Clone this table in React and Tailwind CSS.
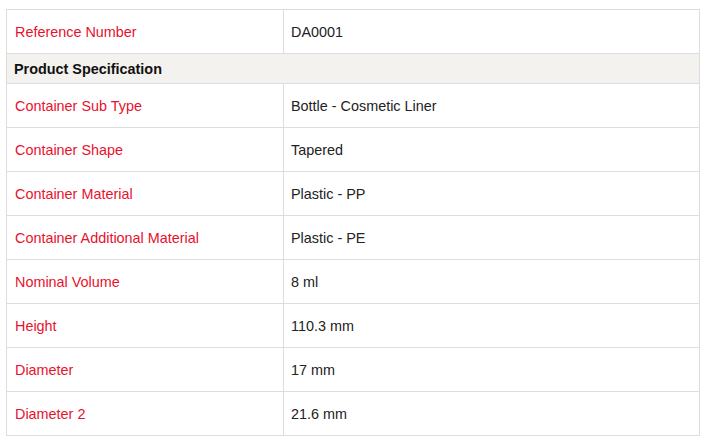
export default function App() {
  const rows = [
    ["Container Sub Type", "Bottle - Cosmetic Liner"],
    ["Container Shape", "Tapered"],
    ["Container Material", "Plastic - PP"],
    ["Container Additional Material", "Plastic - PE"],
    ["Nominal Volume", "8 ml"],
    ["Height", "110.3 mm"],
    ["Diameter", "17 mm"],
    ["Diameter 2", "21.6 mm"],
  ];
  return (
    <div className="w-[711px] h-[445px] bg-white pt-[9px] pl-[6px]" style={{ fontFamily: '"Liberation Sans", Arial, sans-serif' }}>
      <div className="w-[694px] border border-[#dddddd] text-[14.4px]">
        <div className="flex h-[43px]">
          <div className="w-[276px] flex items-center pl-[8px] pt-[2px] text-[#e8112d]">Reference Number</div>
          <div className="flex-1 flex items-center pl-[7px] pt-[2px] border-l border-[#dddddd] text-[#222222]">DA0001</div>
        </div>
        <div className="flex h-[30px] items-center pl-[7px] pt-[2px] border-t border-[#dddddd] bg-[#f3f2ef] font-bold text-[#111111]">
          Product Specification
        </div>
        {rows.map(([k, v]) => (
          <div key={k} className="flex h-[44px] border-t border-[#dddddd]">
            <div className="w-[276px] flex items-center pl-[8px] pt-[2px] text-[#e8112d]">{k}</div>
            <div className="flex-1 flex items-center pl-[7px] pt-[2px] border-l border-[#dddddd] text-[#222222]">{v}</div>
          </div>
        ))}
      </div>
    </div>
  );
}
